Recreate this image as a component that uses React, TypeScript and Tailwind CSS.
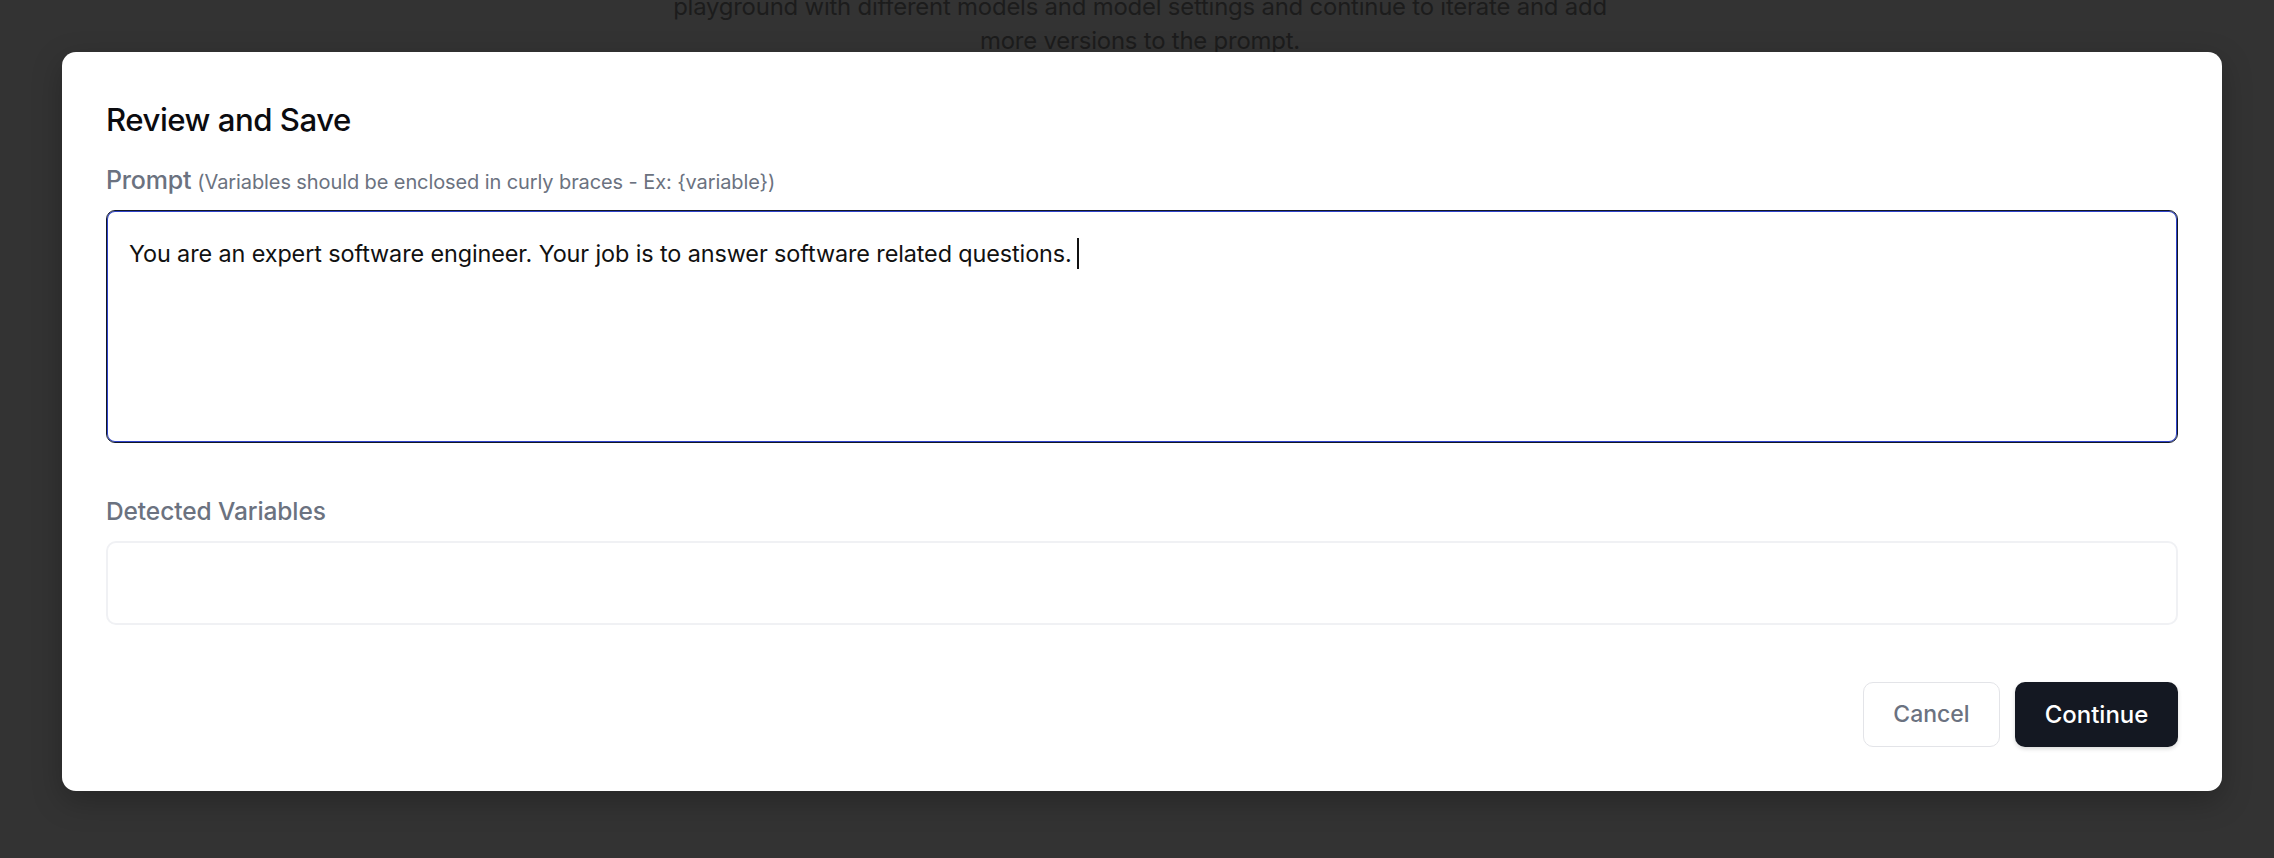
import React from "react";

export default function App() {
  return (
    <div
      className="relative h-[858px] w-full overflow-hidden bg-[#333333]"
      style={{ fontFamily: "Inter, 'Noto Sans', sans-serif" }}
    >
      <div className="absolute left-[6px] right-0 top-[-10px] flex flex-col items-center text-[23.9px] leading-[34px] tracking-[-0.2px] text-[#1c1c1c]">
        <p>playground with different models and model settings and continue to iterate and add</p>
        <p>more versions to the prompt.</p>
      </div>

      <div className="absolute left-[62px] top-[52px] flex w-[2160px] flex-col rounded-[14px] bg-white px-[44px] pb-[44px] pt-[50px] shadow-[0_10px_30px_rgba(0,0,0,0.25)]">
        <h2 className="text-[31.2px] font-medium leading-[36px] tracking-[-0.5px] text-[#0b0b0f]">
          Review and Save
        </h2>

        <div className="mt-[27px] flex items-baseline gap-[6px] leading-[30px]">
          <span className="text-[25px] font-medium tracking-[-0.2px] text-[#6b7280]">Prompt</span>
          <span className="text-[20px] tracking-[-0.1px] text-[#6b7280]">
            (Variables should be enclosed in curly braces - Ex: {"{variable}"})
          </span>
        </div>

        <div className="mt-[13px] h-[233px] rounded-[9px] border border-[#111827] px-[22px] pt-[27px] shadow-[inset_0_0_0_1px_#2f43c9]">
          <p className="flex items-center text-[23.4px] leading-[30px] tracking-[-0.1px] text-[#111111]">
            You are an expert software engineer. Your job is to answer software related questions.
            <span className="ml-[5px] inline-block h-[31px] w-[2px] bg-[#111111]" />
          </p>
        </div>

        <div className="mt-[53px] text-[24.5px] font-medium leading-[30px] tracking-[-0.1px] text-[#6b7280]">
          Detected Variables
        </div>

        <div className="mt-[15px] h-[84px] rounded-[10px] border-2 border-[#f0f1f4]" />

        <div className="mt-[57px] flex justify-end gap-[15px]">
          <button className="h-[65px] w-[137px] rounded-[10px] border border-[#e3e4e8] bg-white text-[23px] font-medium text-[#6b7280]">
            Cancel
          </button>
          <button className="h-[65px] w-[163px] rounded-[10px] bg-[#141822] text-[24px] font-medium text-white shadow-[0_2px_4px_rgba(0,0,0,0.15)]">
            Continue
          </button>
        </div>
      </div>
    </div>
  );
}
